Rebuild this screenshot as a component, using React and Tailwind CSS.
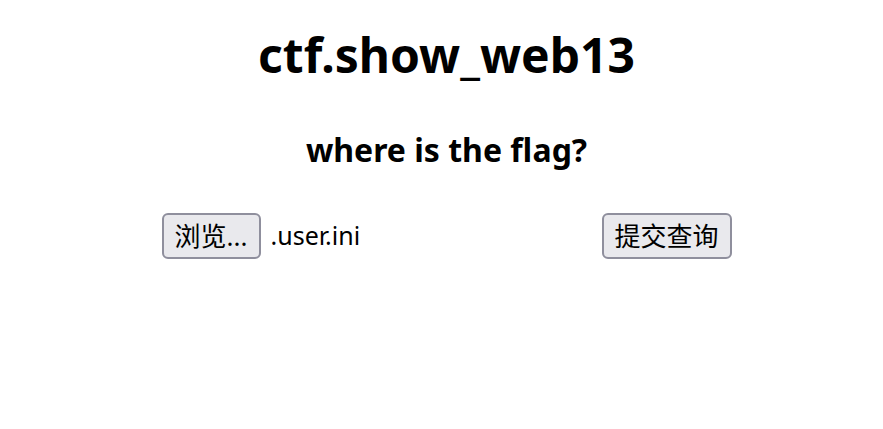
export default function App() {
  return (
    <div className="w-[883px] h-[429px] bg-white text-black font-['Segoe_UI','Noto_Sans','Noto_Sans_CJK_SC',sans-serif] overflow-hidden">
      <div className="flex flex-col items-center pl-[10px]">
        <h1 className="mt-[25px] text-[48px] leading-[60px] font-bold">ctf.show_web13</h1>
        <h2 className="mt-[44px] text-[32px] leading-[42px] font-bold">where is the flag?</h2>
        <div className="mt-[42px] w-[570px] flex items-center justify-between">
          <div className="flex items-center">
            <button className="h-[46px] w-[99px] px-[10px] border-2 border-[#8f8f9d] rounded-[6px] bg-[#e9e9ed] text-[26px] leading-none">浏览...</button>
            <span className="ml-[10px] text-[25px]">.user.ini</span>
          </div>
          <button className="h-[46px] w-[130px] px-[10px] border-2 border-[#8f8f9d] rounded-[6px] bg-[#e9e9ed] text-[26px] leading-none">提交查询</button>
        </div>
      </div>
    </div>
  );
}
